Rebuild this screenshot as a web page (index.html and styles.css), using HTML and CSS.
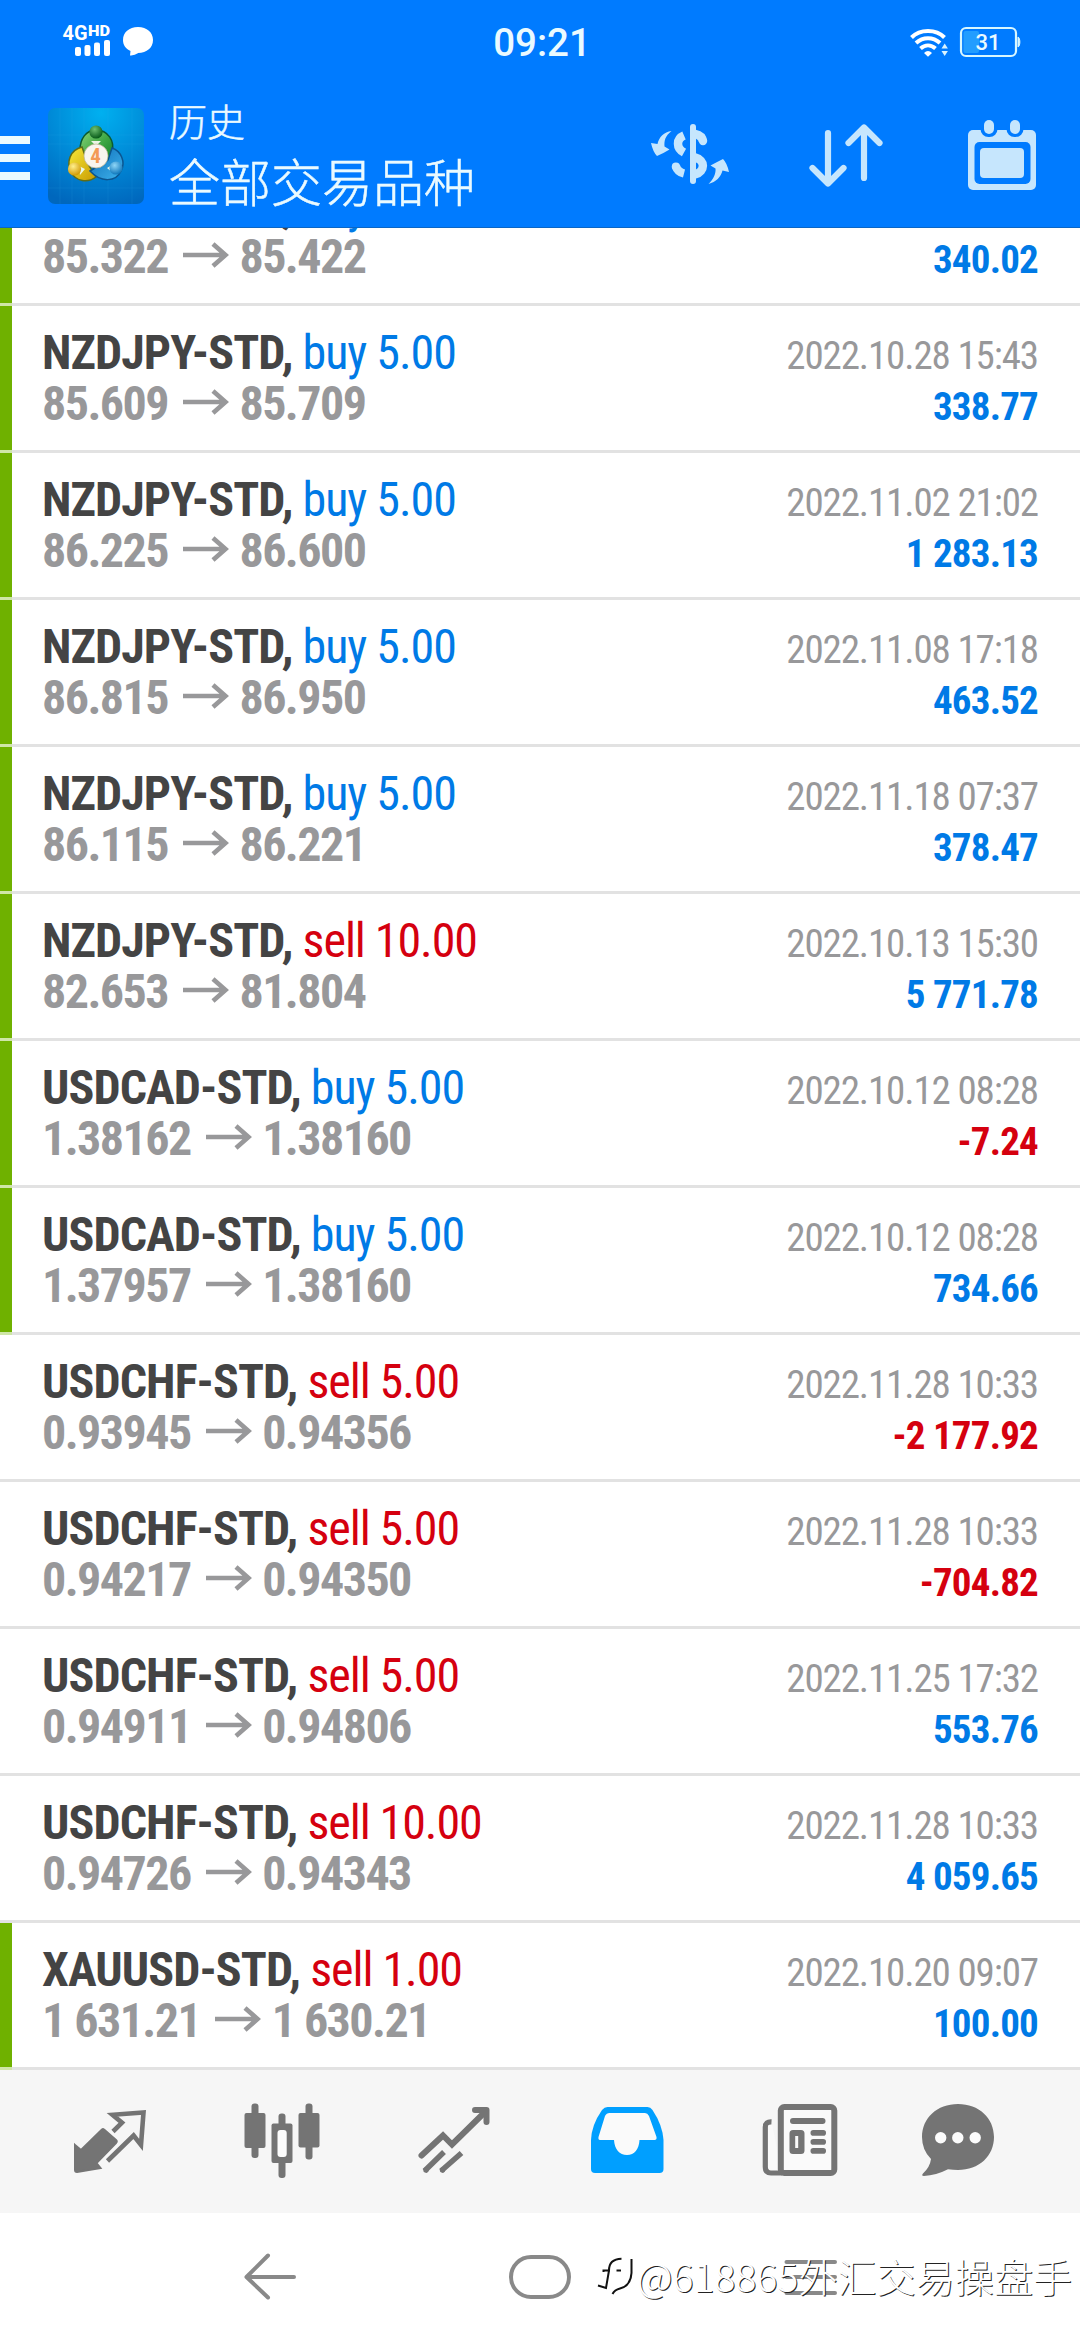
FILE: index.html
```html
<!DOCTYPE html>
<html lang="zh-CN">
<head>
<meta charset="utf-8">
<title>历史</title>
<link rel="stylesheet" href="styles.css">
</head>
<body>
<svg class="defs" width="0" height="0">
  <symbol id="arrow" viewBox="0 0 46 26"><path d="M0 13H43M30 2L42.500 13L30 24" fill="none" stroke="currentColor" stroke-width="4.600"/></symbol>
</svg>
<div class="screen">
  <header class="header">
    <div class="statusbar">
      <div class="status-left">
        <svg width="94" height="36" viewBox="62 22 94 36" fill="#fff">
          <text class="net" x="62.500" y="40" textLength="25" lengthAdjust="spacingAndGlyphs">4G</text>
          <text class="hd" x="88" y="35.500" textLength="22" lengthAdjust="spacingAndGlyphs">HD</text>
          <rect x="75" y="47" width="6" height="9" rx="2"/><rect x="84.500" y="45" width="6" height="11" rx="2"/><rect x="94" y="42.500" width="6" height="13.500" rx="2"/><rect x="104" y="40" width="6" height="16" rx="2"/>
          <path d="M138 27c9 0 15 5.500 15 13s-6 13-15 13c-1 1-5 2.500-8 2.500l.5-4.500c-5-2.500-7.500-6-7.500-11 0-7.500 6-13 15-13z"/>
        </svg>
      </div>
      <div class="clock">09:21</div>
      <div class="status-right">
        <svg width="114" height="34" viewBox="908 25 114 34">
          <g fill="none" stroke="#fff" stroke-width="4"><path d="M911.500 37.500C920 28.700 936 28.700 944.500 37.500"/><path d="M916 43C923 36.500 933 36.500 940 43"/><path d="M920.500 48.500C925 44.500 931 44.500 935.500 48.500"/></g>
          <path d="M924 53q4-4 8 0l-4 3.800z" fill="#fff"/>
          <path d="M941.500 48.500h6.400l-3.200-5zM941.500 51h6.400l-3.200 5z" fill="#d8f3ff"/>
          <rect x="963.500" y="31" width="15.500" height="22" rx="2" fill="#229dff"/>
          <rect x="961" y="28" width="55" height="28" rx="5" fill="none" stroke="#d8f7ff" stroke-width="2.200"/>
          <path d="M1018 37c2.500 1 2.500 9 0 10z" fill="#d8f7ff" stroke="#d8f7ff"/>
          <text class="batt" x="988" y="50.300" text-anchor="middle">31</text>
        </svg>
      </div>
    </div>
    <div class="appbar">
      <svg class="burger" width="30" height="44" viewBox="0 0 30 44"><path d="M0 0h30v8H0zM0 18h30v8H0zM0 36h30v8H0z"/></svg>
      <svg class="logo" width="96" height="96" viewBox="0 0 96 96">
        <defs>
          <radialGradient id="bg" cx=".55" cy=".05" r="1"><stop offset="0" stop-color="#00b0f0"/><stop offset=".55" stop-color="#0088d6"/><stop offset="1" stop-color="#0067bd"/></radialGradient>
          <linearGradient id="gr" x1="0" y1="0" x2="1" y2="1"><stop offset="0" stop-color="#8bd47a"/><stop offset=".5" stop-color="#3fa845"/><stop offset="1" stop-color="#0b7a20"/></linearGradient>
          <linearGradient id="ye" x1="0" y1="0" x2="1" y2="1"><stop offset="0" stop-color="#f6ea3a"/><stop offset="1" stop-color="#c99a00"/></linearGradient>
          <linearGradient id="bl" x1="0" y1="0" x2="1" y2="1"><stop offset="0" stop-color="#0d6cb8"/><stop offset="1" stop-color="#3fb4ec"/></linearGradient>
          <radialGradient id="gb" cx=".4" cy=".3" r=".7"><stop offset="0" stop-color="#6fc072"/><stop offset="1" stop-color="#075a18"/></radialGradient>
          <radialGradient id="yb" cx=".4" cy=".3" r=".7"><stop offset="0" stop-color="#fff08c"/><stop offset="1" stop-color="#d29a05"/></radialGradient>
          <radialGradient id="bb" cx=".4" cy=".3" r=".7"><stop offset="0" stop-color="#8fd6f7"/><stop offset="1" stop-color="#0d76bb"/></radialGradient>
        </defs>
        <rect width="96" height="96" rx="7" fill="url(#bg)"/>
        <path d="M0 27H96M0 36H96M0 80H96M12 0V96M24 0V96M36 0V96M60 0V96M84 0V96" stroke="#37b0f0" stroke-opacity=".13"/>
        <path d="M48 22C60 22 67 33 64 44C63 52 60 57 56 59L32 42C32 31 38 22 48 22z" fill="url(#gr)" stroke="#0b5a30" stroke-width="1.500"/>
        <path d="M34 39C22 42 18 54 23 64C28 74 40 75 48 69L40 56z" fill="url(#ye)" stroke="#5e6c18" stroke-width="1.500"/>
        <path d="M64 40C73 43 78 54 73 63C68 74 53 75 42 63L60 52z" fill="url(#bl)" stroke="#0b5590" stroke-width="1.500"/>
        <path d="M43 33l10 0-5 5zM31 58l6 3-5 6zM59 60l7-4-1 9z" fill="#eaf6e8"/>
        <circle cx="48" cy="24" r="6.600" fill="url(#gb)"/><circle cx="26.500" cy="61" r="6.600" fill="url(#yb)"/><circle cx="68" cy="60" r="6.600" fill="url(#bb)"/>
        <circle cx="48" cy="48" r="12" fill="#f8f5ef" stroke="#b9b08f" stroke-width=".7"/>
        <text class="four" x="47.500" y="55" text-anchor="middle">4</text>
      </svg>
      <div class="heading"><div class="caption">历史</div><div class="title">全部交易品种</div></div>
      <div class="actions">
        <svg width="82" height="72" viewBox="649 119 82 72" fill="none" stroke="#c6e6fd" stroke-width="8.500">
          <path d="M693 127V181" stroke-width="6" stroke-linecap="round"/>
          <path d="M684 135.500C676 139 676 148 684 152.500M675.800 166C677 170 680 172.500 684 173.500"/>
          <circle cx="675.900" cy="166.500" r="4.100" fill="#c6e6fd" stroke="none"/><circle cx="703" cy="141" r="4.200" fill="#c6e6fd" stroke="none"/>
          <path d="M695 134C700 135 702.500 137.500 703 141.500M695 157.500C705.500 160 705.500 171.500 695 174.500"/>
          <g fill="#c6e6fd" stroke="none"><path d="M671.500 131C665 136 664 141 664.500 146.500L669.500 149.500Q664 153 657 156Q653 152 651 143L657.500 144C659 137 664 132 671.500 131z"/><path d="M708.500 184C714 179 716 173 715.500 168.500L710.500 165.500Q717 162 723 159Q727 163 729 172L722.500 170.500C721 177 716 182 708.500 184z"/></g>
        </svg>
        <svg width="76" height="72" viewBox="808 119 76 72" fill="none" stroke="#c6e6fd" stroke-width="6.200" stroke-linecap="round" stroke-linejoin="round"><path d="M828 133V183M812.500 168L828 183.500L843.500 168M864 178V128M848.500 143L864 127.500L879.500 143"/></svg>
        <svg width="70" height="72" viewBox="967 119 70 72" fill="#c6e6fd">
          <rect x="968" y="130" width="68" height="60" rx="5"/>
          <g fill="#007bff"><rect x="980.500" y="115" width="17" height="22" rx="8"/><rect x="1006.500" y="115" width="17" height="22" rx="8"/><rect x="974.500" y="142" width="56" height="42" rx="5"/></g>
          <rect x="980" y="148" width="44" height="30" rx="4"/><rect x="984" y="120" width="10" height="14" rx="5"/><rect x="1010" y="120" width="10" height="14" rx="5"/>
        </svg>
      </div>
    </div>
  </header>

  <main class="list">
    <div class="row green first"><div class="line"><div class="sym">NZDJPY-STD, <span class="buy">buy 5.00</span></div><div class="date">2022.10.28 15:43</div></div><div class="line"><div class="price">85.322<svg class="arr"><use href="#arrow"/></svg>85.422</div><div class="profit">340.02</div></div></div>
    <div class="row green"><div class="line"><div class="sym">NZDJPY-STD, <span class="buy">buy 5.00</span></div><div class="date">2022.10.28 15:43</div></div><div class="line"><div class="price">85.609<svg class="arr"><use href="#arrow"/></svg>85.709</div><div class="profit">338.77</div></div></div>
    <div class="row green"><div class="line"><div class="sym">NZDJPY-STD, <span class="buy">buy 5.00</span></div><div class="date">2022.11.02 21:02</div></div><div class="line"><div class="price">86.225<svg class="arr"><use href="#arrow"/></svg>86.600</div><div class="profit">1 283.13</div></div></div>
    <div class="row green"><div class="line"><div class="sym">NZDJPY-STD, <span class="buy">buy 5.00</span></div><div class="date">2022.11.08 17:18</div></div><div class="line"><div class="price">86.815<svg class="arr"><use href="#arrow"/></svg>86.950</div><div class="profit">463.52</div></div></div>
    <div class="row green"><div class="line"><div class="sym">NZDJPY-STD, <span class="buy">buy 5.00</span></div><div class="date">2022.11.18 07:37</div></div><div class="line"><div class="price">86.115<svg class="arr"><use href="#arrow"/></svg>86.221</div><div class="profit">378.47</div></div></div>
    <div class="row green"><div class="line"><div class="sym">NZDJPY-STD, <span class="sell">sell 10.00</span></div><div class="date">2022.10.13 15:30</div></div><div class="line"><div class="price">82.653<svg class="arr"><use href="#arrow"/></svg>81.804</div><div class="profit">5 771.78</div></div></div>
    <div class="row green"><div class="line"><div class="sym">USDCAD-STD, <span class="buy">buy 5.00</span></div><div class="date">2022.10.12 08:28</div></div><div class="line"><div class="price">1.38162<svg class="arr"><use href="#arrow"/></svg>1.38160</div><div class="profit loss">-7.24</div></div></div>
    <div class="row green"><div class="line"><div class="sym">USDCAD-STD, <span class="buy">buy 5.00</span></div><div class="date">2022.10.12 08:28</div></div><div class="line"><div class="price">1.37957<svg class="arr"><use href="#arrow"/></svg>1.38160</div><div class="profit">734.66</div></div></div>
    <div class="row"><div class="line"><div class="sym">USDCHF-STD, <span class="sell">sell 5.00</span></div><div class="date">2022.11.28 10:33</div></div><div class="line"><div class="price">0.93945<svg class="arr"><use href="#arrow"/></svg>0.94356</div><div class="profit loss">-2 177.92</div></div></div>
    <div class="row"><div class="line"><div class="sym">USDCHF-STD, <span class="sell">sell 5.00</span></div><div class="date">2022.11.28 10:33</div></div><div class="line"><div class="price">0.94217<svg class="arr"><use href="#arrow"/></svg>0.94350</div><div class="profit loss">-704.82</div></div></div>
    <div class="row"><div class="line"><div class="sym">USDCHF-STD, <span class="sell">sell 5.00</span></div><div class="date">2022.11.25 17:32</div></div><div class="line"><div class="price">0.94911<svg class="arr"><use href="#arrow"/></svg>0.94806</div><div class="profit">553.76</div></div></div>
    <div class="row"><div class="line"><div class="sym">USDCHF-STD, <span class="sell">sell 10.00</span></div><div class="date">2022.11.28 10:33</div></div><div class="line"><div class="price">0.94726<svg class="arr"><use href="#arrow"/></svg>0.94343</div><div class="profit">4 059.65</div></div></div>
    <div class="row green"><div class="line"><div class="sym">XAUUSD-STD, <span class="sell">sell 1.00</span></div><div class="date">2022.10.20 09:07</div></div><div class="line"><div class="price">1 631.21<svg class="arr"><use href="#arrow"/></svg>1 630.21</div><div class="profit">100.00</div></div></div>
  </main>

  <nav class="tabs">
    <svg width="76" height="80" viewBox="72 2101 76 80"><path d="M75 2144L81 2149L102 2128.500Q103 2127.500 104 2128.500L116 2139Q117.500 2140.500 116 2142L96.500 2162L100.500 2167L77 2171Q75 2171 75 2169z" fill="#747474" stroke="#747474" stroke-width="2"/><path d="M113 2130.500L122 2121.700L112.500 2113.800L143.500 2111.500L141 2144L133.600 2134.500L107.500 2160" fill="none" stroke="#747474" stroke-width="4.600"/></svg>
    <svg width="76" height="80" viewBox="243.500 2101 76 80" fill="#747474"><rect x="244" y="2112" width="21" height="35" rx="2"/><rect x="251" y="2102.500" width="7" height="54.500" rx="3"/><rect x="298" y="2112" width="21" height="34.500" rx="2"/><rect x="305" y="2102.500" width="7" height="56" rx="3"/><rect x="278" y="2112.500" width="7" height="64.500" rx="3"/><rect x="271" y="2122.500" width="21" height="39.500" rx="2"/><rect x="277" y="2129" width="9.200" height="27" rx="3" fill="#fcfcfc"/></svg>
    <svg width="76" height="80" viewBox="415.500 2101 76 80" fill="none" stroke="#747474" stroke-width="6"><path d="M421 2154.500L442.500 2134.500L451.500 2143.500L485 2110.500" stroke-linecap="round"/><path d="M474.500 2109H486V2121" stroke-linecap="round" stroke-linejoin="round"/><path d="M424 2170L443.500 2151M440.500 2170L461 2152" stroke-width="5.500"/><circle cx="425.500" cy="2169" r="2.700" fill="#747474" stroke="none"/><circle cx="442" cy="2169" r="2.700" fill="#747474" stroke="none"/></svg>
    <svg width="76" height="80" viewBox="588.500 2101 76 80"><path d="M607 2106H647Q650 2106 652 2109Q662 2124 663 2139V2168Q663 2172 659 2172H594.500Q590.500 2172 590.500 2168V2139Q591 2124 601.500 2109Q604 2106 607 2106z" fill="#009fff"/><path d="M609 2112H644.500Q647 2112 648.500 2115L656 2136Q656.500 2139 654 2139H639C638.500 2148 634 2154 626.500 2154S614 2148 613.500 2139H599.500Q597.500 2139 598 2136L604.500 2115Q606 2112 609 2112z" fill="#fafafa"/></svg>
    <svg width="76" height="80" viewBox="762 2101 76 80"><path d="M771.500 2120.800Q765.300 2120.500 765.300 2126V2166Q765.300 2172 771 2172H782" fill="#fafafa" stroke="#747474" stroke-width="5.200"/><rect x="780.800" y="2106" width="53.500" height="66" rx="3.500" fill="#fafafa" stroke="#747474" stroke-width="6"/><g fill="#747474"><rect x="790" y="2117" width="35.500" height="6" rx="3"/><path fill-rule="evenodd" d="M793 2129h8q3.500 0 3.500 3.500v17q0 3.500-3.500 3.500h-8q-3.500 0-3.500-3.500v-17q0-3.500 3.500-3.500zM795.200 2135v12h3v-12z"/><rect x="810.500" y="2129" width="15.500" height="5.700" rx="2.800"/><rect x="810.500" y="2138" width="15.500" height="5.700" rx="2.800"/><rect x="810.500" y="2147" width="15.500" height="5.700" rx="2.800"/></g></svg>
    <svg width="76" height="80" viewBox="920 2101 76 80"><path d="M958 2103C979 2103 994 2117 994 2136S979 2169 958 2169Q953 2169 948 2168.300Q936 2174.500 924 2175Q921 2175 923 2172.500Q930 2166 931 2158Q922 2149 922 2136C922 2117 937 2103 958 2103z" fill="#747474"/><g fill="#fcfcfc"><circle cx="940.700" cy="2136.700" r="5.700"/><circle cx="957.800" cy="2136.700" r="5.700"/><circle cx="975.200" cy="2136.700" r="5.700"/></g></svg>
  </nav>

  <footer class="sysnav">
    <svg width="54" height="50" viewBox="243 2252 54 50" fill="none" stroke="#898989" stroke-width="4" stroke-linecap="round" stroke-linejoin="round"><path d="M294 2277H247M268 2255.500L246.500 2277L268 2297.500"/></svg>
    <div class="home"></div>
    <svg width="54" height="50" viewBox="783.500 2252 54 50" stroke="#898989" stroke-width="4" stroke-linecap="round"><path d="M786 2262H834.500M786 2277H834.500M786 2293H834.500"/></svg>
    <div class="watermark">
      <svg width="40" height="44" viewBox="596 2262 40 44" fill="none" stroke="#111" stroke-width="2"><path d="M603.500 2281V2279.500H609C609 2272 613 2268 621.500 2267.800M609 2279.500L606 2297L598 2294.500M616.500 2279.500H621M631.500 2268V2282C631 2291 626 2296 620 2297.500C616 2298.500 614 2300 612.500 2303"/></svg>
      <span>@618865外汇交易操盘手</span>
    </div>
  </footer>
</div>
</body>
</html>
```
FILE: styles.css
```css
* { box-sizing: border-box; }
body { margin: 0; background: #fff; font-family: "Roboto Condensed", Roboto, "Noto Sans CJK SC", sans-serif; }
svg { display: block; flex: none; }
.defs { position: absolute; }
.screen { display: flex; flex-direction: column; width: 1080px; height: 2340px; overflow: hidden; }

.header { flex: none; height: 228px; background: #007bff; border-bottom: 1px solid #0a66c6; color: #eafaff; }
.statusbar { height: 84px; display: grid; grid-template-columns: 1fr auto 1fr; align-items: center; }
.status-left { padding-left: 62px; padding-bottom: 4px; }
.status-right { display: flex; justify-content: flex-end; padding-right: 58px; }
.clock { font: 500 38.500px/40px Roboto, sans-serif; padding: 1px 0 0 4px; }
.net { font: 700 20.500px Roboto, sans-serif; }
.hd { font: 900 14px Roboto, sans-serif; }
.batt { font: 500 22px Roboto, sans-serif; fill: #eafaff; }

.appbar { height: 144px; display: flex; align-items: center; }
.burger { fill: #eafaff; margin-top: 4px; }
.logo { margin-left: 18px; }
.four { font: 700 21px "Roboto Condensed", sans-serif; fill: #f39a56; }
.heading { margin: -12px 0 0 25px; font-family: "Noto Sans CJK SC", sans-serif; font-weight: 300; line-height: 60px; white-space: nowrap; -webkit-text-stroke: .5px #eafaff; }
.caption { font-size: 38px; }
.title { font-size: 51px; }
.actions { margin: 0 0 2px auto; padding-right: 43px; display: flex; align-items: center; }
.actions svg:nth-child(2) { margin-left: 77px; }
.actions svg:nth-child(3) { margin-left: 83px; }

.list { flex: none; height: 1842px; overflow: hidden; }
.row { height: 147px; padding: 21px 42px 0; border-bottom: 3px solid #e2e2e2; }
.green { background: linear-gradient(#6fb100, #6fb100) 0 0 / 12px 144px no-repeat; position: relative; }
.green::after { content: ""; position: absolute; left: 0; bottom: -3px; width: 12px; height: 3px; background: #cfe6a8; }
.first { margin-top: -69px; }
.line { display: flex; justify-content: space-between; align-items: baseline; height: 51px; line-height: 51px; white-space: nowrap; }
.sym { font-size: 48px; font-weight: 700; color: #444; letter-spacing: -.92px; }
.sym span { font-weight: 400; letter-spacing: -1.050px; }
.buy { color: #007ae6; }
.sell { color: #d5000f; }
.price { font-size: 48px; font-weight: 700; color: #98989a; letter-spacing: -1.550px; }
.arr { display: inline-block; width: 46px; height: 26px; margin: 0 10.500px 0 15px; vertical-align: 5px; }
.date { font-size: 39px; color: #98989a; letter-spacing: -1.120px; }
.profit { font-size: 39px; font-weight: 700; color: #007ae6; letter-spacing: -.8px; }
.loss { color: #d5000f; }

.tabs { flex: none; height: 143px; padding-left: 72px; background: #f6f6f6; display: grid; grid-template-columns: 171.500px 172px 173px 173.500px 158px 76px; align-items: center; }
.sysnav { flex: 1; position: relative; display: flex; justify-content: space-between; align-items: center; padding: 0 242.500px 0 243px; }
.home { width: 62px; height: 44px; border: 4px solid #898989; border-radius: 22px; }
.watermark { position: absolute; left: 596px; top: 34px; display: flex; align-items: center; white-space: nowrap; font: 300 39px/56px "Noto Sans CJK SC", sans-serif; letter-spacing: .1px; color: #fff; text-shadow: 1px 1px 0 #222; }
.watermark span { margin-left: 1px; }
```
